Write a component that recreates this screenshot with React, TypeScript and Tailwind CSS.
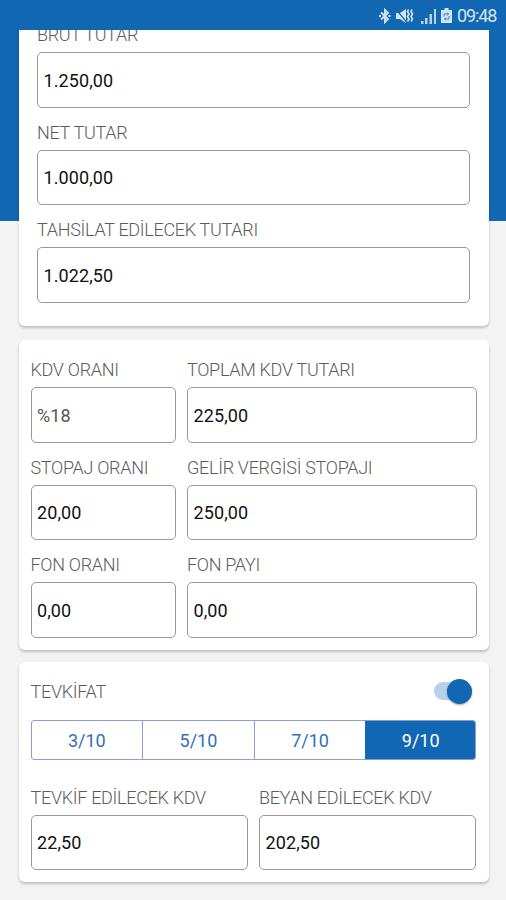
import React from "react";

const LABEL = "whitespace-nowrap text-[18px] font-light tracking-[-0.3px] text-[#5c5c5c]";

function Field({ label, value, muted = false }: { label: string; value: string; muted?: boolean }) {
  return (
    <label className="block h-[97.5px]">
      <span className={`flex h-[42px] items-center pt-[7px] ${LABEL}`}>{label}</span>
      <span className={`flex h-[55.5px] items-center rounded-[5px] border-[1.5px] border-[#999] pl-[5.5px] pt-px text-[18px] tracking-[0.1px] ${muted ? "text-[#555]" : "text-[#111]"}`}>
        {value}
      </span>
    </label>
  );
}

function StatusBar() {
  return (
    <header className="relative z-10 flex h-[29.5px] shrink-0 items-center justify-end bg-[#1267b2] pr-[9px] text-[#d3e5f5]">
      <svg width="12" height="16" viewBox="0 0 12 16" fill="none" stroke="currentColor" strokeWidth="1.9" className="mt-[2px] mr-[5px]">
        <path d="M2 4.500 9 11 6 14V2l3 3L2 11.500" />
        <path d="M0 8h2M9.500 8h2" />
      </svg>
      <svg width="18" height="16" viewBox="0 0 18 16" fill="currentColor" className="mt-[2px] mr-[7px]">
        <path d="M0 5h4L10 1v14l-6-4H0z" />
        <path d="M0 1.500 11 14.500" stroke="#1267b2" strokeWidth="1.200" />
        <path d="m12.500 1.500-1 2L13 6l-1.500 2.500L13 11l-1.500 2.500M16 1.500l-1 2L16.500 6 15 8.500l1.500 2.500L15 13.500" fill="none" stroke="currentColor" strokeWidth="1.600" />
      </svg>
      <svg width="15" height="15" viewBox="0 0 15 15" fill="currentColor" className="mt-[3px] mr-[5px]">
        <path d="M0 12h2.500v3H0zM4 9h2.500v6H4zM8.500 5H11v10H8.500zM13 0h2v15h-2z" opacity=".85" />
      </svg>
      <svg width="11" height="15" viewBox="0 0 11 15" className="mt-[2px] mr-[5px]">
        <path d="M3.500 0h4v2H11v13H0V2h3.500z" fill="currentColor" />
        <path d="M3 8.500V6h4.500M6 4.500 7.500 6 6 7.500M8 8v3H3.500M5 9.500 3.500 11 5 12.500" fill="none" stroke="#1267b2" strokeWidth="1" opacity=".75" />
      </svg>
      <span className="mt-[3px] w-[40px] text-[18px] leading-none tracking-[-1.1px]">09:48</span>
    </header>
  );
}

const CARD = "rounded-[6px] bg-white shadow-[0_2px_3px_rgba(0,0,0,0.22)]";
const RATES = ["3/10", "5/10", "7/10", "9/10"];

export default function App() {
  return (
    <div className="flex h-[900px] w-[506px] flex-col overflow-hidden bg-[#f3f3f3] bg-[linear-gradient(#1267b2,#1267b2)] bg-[length:100%_221px] bg-no-repeat font-[Roboto,sans-serif]">
      <StatusBar />
      <main className="flex min-h-0 flex-1 flex-col overflow-hidden pr-[17px] pl-[18.5px]">
        <section className={`-mt-[19.5px] h-[316px] shrink-0 pr-[19px] pl-[18.5px] ${CARD}`}>
          <Field label="BRÜT TUTAR" value="1.250,00" />
          <Field label="NET TUTAR" value="1.000,00" />
          <Field label="TAHSİLAT EDİLECEK TUTARI" value="1.022,50" />
        </section>
        <section className={`mt-[13.5px] grid h-[310.500px] shrink-0 grid-cols-[145px_289.5px] content-start gap-x-[11.500px] pt-[5.500px] pl-[12px] ${CARD}`}>
          <Field label="KDV ORANI" value="%18" muted />
          <Field label="TOPLAM KDV TUTARI" value="225,00" />
          <Field label="STOPAJ ORANI" value="20,00" />
          <Field label="GELİR VERGİSİ STOPAJI" value="250,00" />
          <Field label="FON ORANI" value="0,00" />
          <Field label="FON PAYI" value="0,00" />
        </section>
        <section className={`mt-[12px] h-[220px] shrink-0 pr-[13px] pl-[12px] ${CARD}`}>
          <div className="flex h-[58px] items-center justify-between">
            <span className={LABEL}>TEVKİFAT</span>
            <span className="mr-[4.5px] flex h-[18px] w-[38px] items-center justify-end rounded-full bg-[#b6d1e9]">
              <span className="size-[25px] shrink-0 rounded-full bg-[#1267b2] shadow-[0_1px_2px_rgba(0,0,0,0.35)]" />
            </span>
          </div>
          <div className="flex h-[40px] divide-x divide-[#8b9fd2] overflow-hidden rounded-[3px] border border-[#8b9fd2]">
            {RATES.map((rate) => (
              <span key={rate} className={`flex flex-1 items-center justify-center pt-px text-[18px] ${rate === "9/10" ? "-m-px bg-[#1267b2] text-white" : "text-[#3270b7]"}`}>
                {rate}
              </span>
            ))}
          </div>
          <div className="mt-[12.5px] grid grid-cols-2 gap-x-[11.500px]">
            <Field label="TEVKİF EDİLECEK KDV" value="22,50" />
            <Field label="BEYAN EDİLECEK KDV" value="202,50" />
          </div>
        </section>
      </main>
    </div>
  );
}
